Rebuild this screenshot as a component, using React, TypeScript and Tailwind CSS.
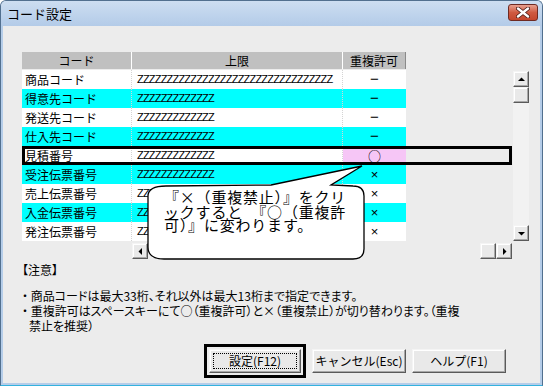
import React from "react";

type Row = { name: string; limit: string; dup: string; cyan?: boolean; selected?: boolean };

const Z13 = "Z".repeat(13);

const rows: Row[] = [
  { name: "商品コード", limit: "Z".repeat(33), dup: "−" },
  { name: "得意先コード", limit: Z13, dup: "−", cyan: true },
  { name: "発送先コード", limit: Z13, dup: "−" },
  { name: "仕入先コード", limit: Z13, dup: "−", cyan: true },
  { name: "見積番号", limit: Z13, dup: "○", selected: true },
  { name: "受注伝票番号", limit: Z13, dup: "×", cyan: true },
  { name: "売上伝票番号", limit: Z13, dup: "×" },
  { name: "入金伝票番号", limit: Z13, dup: "×", cyan: true },
  { name: "発注伝票番号", limit: Z13, dup: "×" },
];

const raised =
  "bg-[#e9e9e9] border border-t-[#f4f4f4] border-l-[#f4f4f4] border-r-[#5a5a5a] border-b-[#5a5a5a] shadow-[inset_-1px_-1px_0_#a8a8a8,inset_1px_1px_0_#ffffff]";

const ScrollBtn = ({ dir }: { dir?: "up" | "down" | "left" | "right" }) => {
  const pts: Record<string, string> = {
    up: "4,9 11,9 7.5,5.5",
    down: "4,6 11,6 7.5,9.5",
    left: "9,4 9,11 5.5,7.5",
    right: "6,4 6,11 9.5,7.5",
  };
  return (
    <div className={`w-[16px] h-[16px] shrink-0 ${raised}`}>
      {dir && (
        <svg width="14" height="14" viewBox="0 0 14 14" className="block">
          <polygon points={pts[dir]} fill="#000" />
        </svg>
      )}
    </div>
  );
};

const Button = ({ label }: { label: string }) => (
  <div className={`w-[94px] h-[24px] flex items-center justify-center text-[12px] text-black ${raised}`}>
    {label}
  </div>
);

export default function App() {
  return (
    <div className="relative w-[543px] h-[386px] overflow-hidden rounded-t-[6px] border border-[#52708f] border-b-[#34b2de] bg-[#b5cde9] flex flex-col [font-family:'Noto_Sans_CJK_JP',sans-serif] text-black">
      {/* title bar */}
      <div className="h-[25px] shrink-0 flex items-center justify-between pl-[6px] pr-[4px] bg-gradient-to-b from-[#cddef1] to-[#b3cbe8]">
        <span className="text-[13px] leading-none">コード設定</span>
        <div className="w-[30px] h-[17px] mb-[3px] rounded-[3px] border border-[#6e2a22] bg-gradient-to-b from-[#e7a08f] via-[#cf5a41] to-[#c4462d] flex items-center justify-center">
          <svg width="14" height="11" viewBox="0 0 14 11">
            <path d="M2 1.5 L12 9.5 M12 1.5 L2 9.5" stroke="#4a1a14" strokeWidth="4" strokeLinecap="round" />
            <path d="M2 1.5 L12 9.5 M12 1.5 L2 9.5" stroke="#fff" strokeWidth="2.4" strokeLinecap="round" />
          </svg>
        </div>
      </div>

      {/* client */}
      <div className="flex-1 mx-[2px] mb-[2px] bg-[#ececec] pl-[19px] pt-[26px] flex flex-col">
        {/* grid */}
        <div className="flex">
          <div className="w-[491px] flex flex-col">
            <div className="flex h-[18px] text-[12px]">
              <div className="w-[110px] h-[17px] bg-[#c0c0c0] border-r border-r-white flex items-center justify-center">コード</div>
              <div className="w-[211px] h-[17px] bg-[#c0c0c0] border-r border-r-white flex items-center justify-center">上限</div>
              <div className="w-[63px] h-[17px] bg-[#c0c0c0] border-r border-r-[#8a8a8a] flex items-center justify-center">重複許可</div>
            </div>
            {rows.map((r) => (
              <div key={r.name} className="relative flex h-[19px]">
                <div
                  className={`w-[110px] pl-[3px] flex items-center text-[12px] border-r border-dotted border-r-[#d4d4d4] ${r.cyan ? "bg-[#00ffff]" : "bg-white"}`}
                >
                  {r.name}
                </div>
                <div
                  className={`w-[211px] pl-[5px] flex items-center border-r border-dotted border-r-[#d4d4d4] ${r.cyan ? "bg-[#00ffff]" : "bg-white"} [font-family:'Liberation_Sans',sans-serif] text-[11px] tracking-[-0.8px] whitespace-nowrap`}
                >
                  {r.limit}
                </div>
                <div
                  className={`w-[63px] flex items-center justify-center ${r.selected ? "bg-[#f6c6f6] text-[13px]" : r.cyan ? "bg-[#00ffff]" : "bg-white"} ${r.dup === "−" ? "text-[15px]" : r.dup === "×" ? "text-[13px]" : ""} ${r.dup === "○" ? "" : "[font-family:'Liberation_Sans',sans-serif]"}`}
                >
                  {r.dup}
                </div>
                {r.selected && <div className="absolute left-0 top-0 w-[490px] h-[19px] border-[3px] border-black" />}
              </div>
            ))}
            <div className="flex mt-[2px] ml-[110px] w-[380px]">
              <ScrollBtn dir="left" />
              <div className="flex-1" />
              <ScrollBtn />
              <ScrollBtn dir="right" />
            </div>
          </div>
          <div className="mt-[19px] h-[170px] flex flex-col bg-[#f2f2f2]">
            <ScrollBtn dir="up" />
            <ScrollBtn />
            <div className="flex-1" />
            <ScrollBtn dir="down" />
          </div>
        </div>

        {/* notes */}
        <div className="mt-[3px] text-[12px] leading-[15px] [font-feature-settings:'palt']">
          <div>【注意】</div>
          <div className="mt-[11px] whitespace-nowrap">・ 商品コードは最大33桁、それ以外は最大13桁まで指定できます。</div>
          <div className="whitespace-nowrap">・ 重複許可はスペースキーにて○（重複許可）と×（重複禁止）が切り替わります。（重複</div>
          <div className="pl-[7px] whitespace-nowrap">禁止を推奨）</div>
        </div>

        {/* buttons */}
        <div className="mt-[11px] flex items-center gap-[6px] pl-[182px]">
          <div className="border-[3px] border-black p-[2px]">
            <div className={`relative w-[92px] h-[24px] flex items-center justify-center text-[12px] ${raised}`}>
              <div className="absolute inset-[3px] border border-dotted border-black" />
              設定(F12)
            </div>
          </div>
          <Button label="キャンセル(Esc)" />
          <Button label="ヘルプ(F1)" />
        </div>
      </div>

      {/* callout */}
      <svg className="absolute left-[140px] top-[160px]" width="230" height="105" viewBox="0 0 230 105">
        <path
          d="M25 25 L130 24 L221 5 L190 24 L212 25 Q223 25 223 35 L223 88 Q223 98 212 98 L23 98 Q7 98 7 86 L7 35 Q7 25 25 25 Z"
          fill="#fff"
          stroke="#000"
          strokeWidth="1.3"
        />
      </svg>
      <div className="absolute left-[163px] top-[188px] text-[15px] tracking-[0.8px] whitespace-nowrap">
        <div className="h-[15px] leading-[15px]">『×（重複禁止）』をクリ</div>
        <div className="h-[13px] leading-[15px]">ックすると　『○（重複許</div>
        <div className="h-[15px] leading-[15px]">可）』に変わります。</div>
      </div>
    </div>
  );
}
